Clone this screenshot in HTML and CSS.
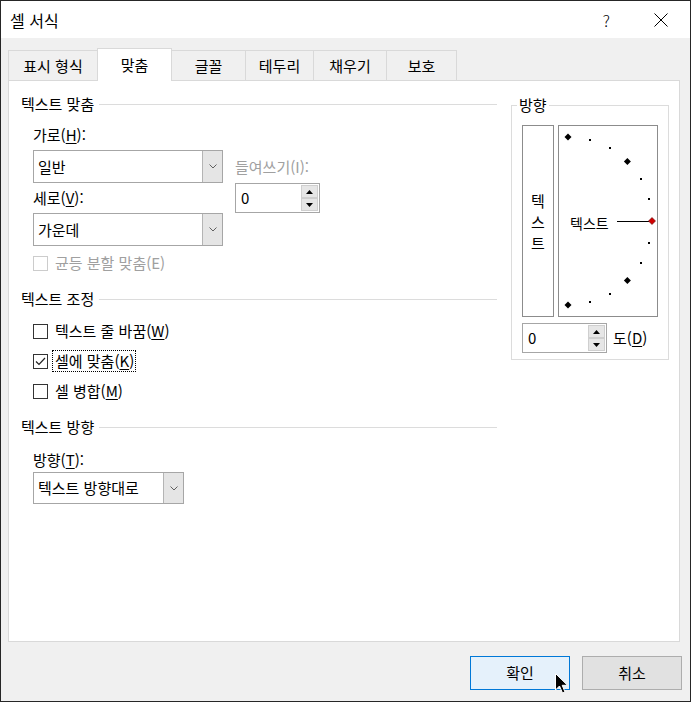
FILE: index.html
```html
<!DOCTYPE html>
<html lang="ko">
<head>
    <meta charset="UTF-8">
    <meta name="viewport" content="width=device-width, initial-scale=1.0">
    <title>셀 서식</title>
    <link rel="stylesheet" href="styles.css">
</head>
<body>
    <div class="dialog">
        <div class="titlebar">
            <span class="title">셀 서식</span>
            <span class="help">?</span>
            <svg class="close" width="14" height="14" viewBox="0 0 14 14">
                <path d="M0.5 0.5 L13.5 13.5 M13.5 0.5 L0.5 13.5" stroke="#000" stroke-width="1" fill="none"/>
            </svg>
        </div>

        <div class="tabs">
            <div class="tab t1">표시 형식</div>
            <div class="tab t2 active">맞춤</div>
            <div class="tab t3">글꼴</div>
            <div class="tab t4">테두리</div>
            <div class="tab t5">채우기</div>
            <div class="tab t6">보호</div>
        </div>

        <div class="panel">
            <div class="left">
                <div class="sec-head"><span>텍스트 맞춤</span></div>
                <div class="sec-body">
                    <div class="align-grid">
                        <div class="lbl lbl-h">가로(<u>H</u>):</div>
                        <div class="select sel-h">
                            <span class="val">일반</span>
                            <span class="drop"><svg width="8" height="5" viewBox="0 0 8 5"><path d="M0.5 0.5 L4 4 L7.5 0.5" stroke="#606060" fill="none"/></svg></span>
                        </div>
                        <div class="lbl lbl-indent disabled">들여쓰기(I):</div>
                        <div class="lbl lbl-v">세로(<u>V</u>):</div>
                        <div class="spin spin-indent">
                            <span class="num">0</span>
                            <span class="btns">
                                <span><svg width="7" height="4" viewBox="0 0 7 4"><path d="M0 4 L3.5 0 L7 4 Z" fill="#000"/></svg></span>
                                <span><svg width="7" height="4" viewBox="0 0 7 4"><path d="M0 0 L3.5 4 L7 0 Z" fill="#000"/></svg></span>
                            </span>
                        </div>
                        <div class="select sel-v">
                            <span class="val">가운데</span>
                            <span class="drop"><svg width="8" height="5" viewBox="0 0 8 5"><path d="M0.5 0.5 L4 4 L7.5 0.5" stroke="#606060" fill="none"/></svg></span>
                        </div>
                    </div>
                    <div class="check check-disabled disabled">
                        <span class="box"></span>
                        <span>균등 분할 맞춤(E)</span>
                    </div>
                </div>

                <div class="sec-head sec-adjust"><span>텍스트 조정</span></div>
                <div class="sec-body checks">
                    <div class="check">
                        <span class="box"></span>
                        <span>텍스트 줄 바꿈(<u>W</u>)</span>
                    </div>
                    <div class="check">
                        <span class="box"><svg width="13" height="13" viewBox="0 0 13 13"><path d="M2 6.5 L5 9.5 L11 3" stroke="#222" stroke-width="1.2" fill="none"/></svg></span>
                        <span class="focus">셀에 맞춤(<u>K</u>)</span>
                    </div>
                    <div class="check">
                        <span class="box"></span>
                        <span>셀 병합(<u>M</u>)</span>
                    </div>
                </div>

                <div class="sec-head sec-dir"><span>텍스트 방향</span></div>
                <div class="sec-body">
                    <div class="lbl lbl-t">방향(<u>T</u>):</div>
                    <div class="select sel-t">
                        <span class="val">텍스트 방향대로</span>
                        <span class="drop"><svg width="8" height="5" viewBox="0 0 8 5"><path d="M0.5 0.5 L4 4 L7.5 0.5" stroke="#606060" fill="none"/></svg></span>
                    </div>
                </div>
            </div>

            <div class="right">
                <div class="group">
                    <span class="group-label">방향</span>
                    <div class="orient">
                        <div class="vert-box">
                            <span>텍</span>
                            <span>스</span>
                            <span>트</span>
                        </div>
                        <div class="arc-box">
                            <svg width="98" height="190" viewBox="0 0 98 190">
                                <g fill="#000">
                                    <path d="M9 7.5 L12.5 11 L9 14.5 L5.5 11 Z"/>
                                    <rect x="30" y="13" width="2" height="2"/>
                                    <rect x="50" y="21" width="2" height="2"/>
                                    <path d="M68.4 32.1 L71.9 35.6 L68.4 39.1 L64.9 35.6 Z"/>
                                    <rect x="81" y="52" width="2" height="2"/>
                                    <rect x="89" y="72" width="2" height="2"/>
                                    <rect x="89" y="116" width="2" height="2"/>
                                    <rect x="81" y="136" width="2" height="2"/>
                                    <path d="M68.4 150.9 L71.9 154.4 L68.4 157.9 L64.9 154.4 Z"/>
                                    <rect x="50" y="167" width="2" height="2"/>
                                    <rect x="30" y="175" width="2" height="2"/>
                                    <path d="M9 175.5 L12.5 179 L9 182.5 L5.5 179 Z"/>
                                </g>
                                <line x1="58" y1="95.5" x2="90" y2="95.5" stroke="#000" stroke-width="1"/>
                                <path d="M93 91.5 L96.5 95 L93 98.5 L89.5 95 Z" fill="#d00000" stroke="#600000" stroke-width="0.6"/>
                                <text x="11" y="103" class="arc-text">텍스트</text>
                            </svg>
                        </div>
                    </div>
                    <div class="deg-row">
                        <div class="spin spin-deg">
                            <span class="num">0</span>
                            <span class="btns">
                                <span><svg width="7" height="4" viewBox="0 0 7 4"><path d="M0 4 L3.5 0 L7 4 Z" fill="#000"/></svg></span>
                                <span><svg width="7" height="4" viewBox="0 0 7 4"><path d="M0 0 L3.5 4 L7 0 Z" fill="#000"/></svg></span>
                            </span>
                        </div>
                        <span class="deg-lbl">도(<u>D</u>)</span>
                    </div>
                </div>
            </div>
        </div>

        <div class="footer">
            <div class="btn primary">확인</div>
            <div class="btn">취소</div>
        </div>

        <!-- mouse pointer over the OK button -->
        <svg class="cursor" width="14" height="22" viewBox="0 0 14 22">
            <path d="M0.5 0.5 L0.5 17 L4.5 13 L7.5 20 L10 19 L7.2 12.3 L12.5 12.3 Z" fill="#000" stroke="#fff" stroke-width="1"/>
        </svg>
    </div>
</body>
</html>
```

FILE: styles.css
```css
* {
    box-sizing: border-box;
}

body {
    margin: 0;
    font-family: "Noto Sans CJK KR", "Noto Sans", sans-serif;
    font-size: 15px;
    line-height: 20px;
    color: #000;
}

u {
    text-underline-offset: 2px;
}

.dialog {
    position: relative;
    width: 691px;
    height: 702px;
    border: 1px solid #262626;
    background: #f0f0f0;
}

/* title bar */
.titlebar {
    height: 37px;
    background: #fff;
    display: flex;
    align-items: center;
    padding-left: 9px;
    padding-right: 22px;
}

.title {
    flex: 1;
    font-size: 16px;
}

.help {
    font-size: 16px;
    font-weight: 300;
    margin-right: 44px;
}

/* tabs */
.tabs {
    display: flex;
    align-items: flex-end;
    height: 42px;
    padding-left: 7px;
}

.tab {
    height: 30px;
    border: 1px solid #d9d9d9;
    border-bottom: none;
    text-align: center;
    line-height: 30px;
    margin-left: -1px;
}

.tab.t1 { width: 90px; margin-left: 0; }
.tab.t2 { width: 75px; }
.tab.t3 { width: 75px; }
.tab.t4 { width: 69px; }
.tab.t5 { width: 74px; }
.tab.t6 { width: 71px; }

.tab.active {
    position: relative;
    z-index: 1;
    height: 33px;
    margin-bottom: -1px;
    background: #fff;
    line-height: 31px;
}

/* main panel */
.panel {
    height: 562px;
    margin: 0 10px 0 7px;
    border: 1px solid #d9d9d9;
    background: #fff;
    display: flex;
    gap: 14px;
    padding: 13px 10px 0 12px;
}

.left {
    width: 476px;
}

.sec-head {
    display: flex;
    align-items: center;
    height: 20px;
}

.sec-head::after {
    content: "";
    flex: 1;
    border-top: 1px solid #dcdcdc;
    margin-left: 5px;
}

.sec-body {
    padding-left: 12px;
}

.disabled {
    color: #a0a0a0;
}

.align-grid {
    display: grid;
    grid-template-columns: 190px 85px;
    grid-template-rows: 25px 33px 30px 33px;
    column-gap: 12px;
    margin-top: 11px;
}

.lbl-h { grid-column: 1; grid-row: 1; }
.sel-h { grid-column: 1; grid-row: 2; }
.lbl-indent { grid-column: 2; grid-row: 2; align-self: center; }
.lbl-v { grid-column: 1; grid-row: 3; align-self: center; }
.spin-indent { grid-column: 2; grid-row: 3; }
.sel-v { grid-column: 1; grid-row: 4; }

.select {
    display: flex;
    height: 33px;
    border: 1px solid #a6a6a6;
    background: #fff;
}

.select .val {
    flex: 1;
    padding-left: 4px;
    line-height: 31px;
}

.select .drop {
    width: 20px;
    background: #e5e5e5;
    border-left: 1px solid #b4b4b4;
    display: flex;
    align-items: center;
    justify-content: center;
}

.spin {
    display: flex;
    height: 30px;
    border: 1px solid #a6a6a6;
    background: #fff;
}

.spin .num {
    flex: 1;
    padding-left: 5px;
    line-height: 28px;
}

.spin .btns {
    width: 19px;
    display: flex;
    flex-direction: column;
    padding: 1px;
}

.spin .btns span {
    flex: 1;
    background: #e6e6e6;
    border: 1px solid #cfcfcf;
    display: flex;
    align-items: center;
    justify-content: center;
}

/* checkboxes */
.check {
    display: flex;
    align-items: center;
    height: 30px;
}

.box {
    width: 15px;
    height: 15px;
    border: 1px solid #333;
    background: #fff;
    margin-right: 7px;
    display: flex;
    align-items: center;
    justify-content: center;
}

.check-disabled {
    height: 20px;
    margin-top: 7px;
}

.check-disabled .box {
    border-color: #cccccc;
}

.focus {
    border: 1px dotted #000;
    padding: 0 1px 0 2px;
    margin-left: -3px;
    line-height: 20px;
}

.sec-adjust {
    margin-top: 16px;
}

.checks {
    margin-top: 7px;
}

.sec-dir {
    margin-top: 11px;
}

.lbl-t {
    margin-top: 13px;
}

.sel-t {
    width: 151px;
    height: 32px;
    margin-top: 2px;
}

.sel-t .val {
    line-height: 30px;
}

/* orientation group */
.right {
    width: 158px;
}

.group {
    position: relative;
    margin-top: 11px;
    border: 1px solid #dcdcdc;
    padding: 19px 10px 6px;
}

.group-label {
    position: absolute;
    top: -11px;
    left: 5px;
    padding: 0 2px;
    background: #fff;
}

.orient {
    display: flex;
    gap: 4px;
}

.vert-box {
    width: 32px;
    height: 192px;
    border: 1px solid #8c8c8c;
    display: flex;
    flex-direction: column;
    align-items: center;
    justify-content: center;
    line-height: 21px;
}

.arc-box {
    width: 100px;
    height: 192px;
    border: 1px solid #8c8c8c;
}

.arc-box svg {
    display: block;
}

.arc-text {
    font-family: "Noto Sans CJK KR", "Noto Sans", sans-serif;
    font-size: 14px;
}

.deg-row {
    display: flex;
    align-items: center;
    gap: 6px;
    margin-top: 6px;
}

.spin-deg {
    width: 85px;
}

/* buttons */
.footer {
    display: flex;
    justify-content: flex-end;
    gap: 12px;
    padding: 14px 8px 0 0;
}

.btn {
    width: 100px;
    height: 34px;
    border: 1px solid #adadad;
    background: #e1e1e1;
    display: flex;
    align-items: center;
    justify-content: center;
}

.btn.primary {
    border-color: #0078d7;
    background: #e5f1fb;
}

.cursor {
    position: absolute;
    left: 554px;
    top: 672px;
}
```
